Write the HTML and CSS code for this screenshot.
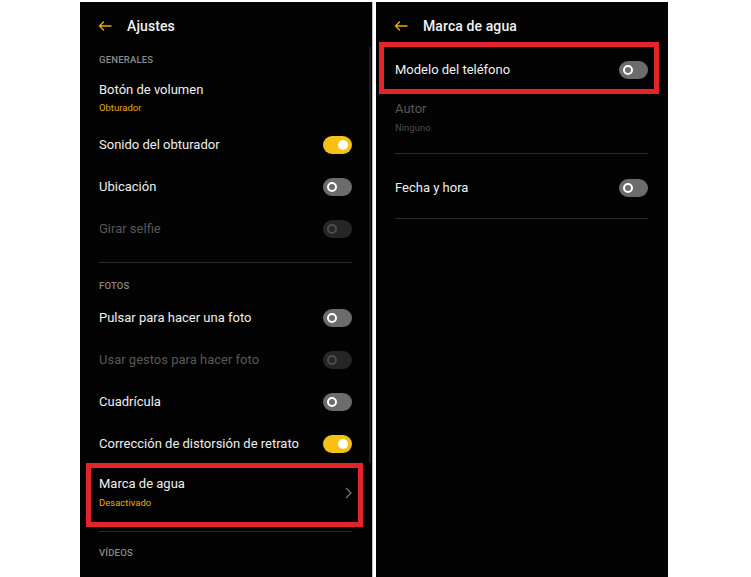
FILE: index.html
```html
<!DOCTYPE html>
<html lang="es">
<head>
<meta charset="utf-8">
<link rel="stylesheet" href="styles.css">
</head>
<body>
<div class="stage">
  <section class="panel panel-left">
    <div class="scrollbar"></div>
    <header class="head">
      <svg class="back" width="14" height="10" viewBox="0 0 14 10"><path d="M13 5H1.5M5.5 1L1.5 5L5.5 9" fill="none" stroke="#e5ad0c" stroke-width="1.4" stroke-linecap="round" stroke-linejoin="round"/></svg>
      <h1 class="title">Ajustes</h1>
    </header>
    <div class="section s-first">GENERALES</div>
    <div class="row row-two">
      <div class="texts"><div class="label">Botón de volumen</div><div class="sub">Obturador</div></div>
    </div>
    <div class="row"><div class="label">Sonido del obturador</div><span class="toggle on"></span></div>
    <div class="row"><div class="label">Ubicación</div><span class="toggle"></span></div>
    <div class="row"><div class="label dis">Girar selfie</div><span class="toggle disabled"></span></div>
    <div class="divider d-left"></div>
    <div class="section s-fotos">FOTOS</div>
    <div class="row"><div class="label">Pulsar para hacer una foto</div><span class="toggle"></span></div>
    <div class="row"><div class="label dis">Usar gestos para hacer foto</div><span class="toggle disabled"></span></div>
    <div class="row"><div class="label">Cuadrícula</div><span class="toggle"></span></div>
    <div class="row"><div class="label">Corrección de distorsión de retrato</div><span class="toggle on"></span></div>
    <div class="row row-marca">
      <div class="texts"><div class="label">Marca de agua</div><div class="sub">Desactivado</div></div>
      <svg class="chev" width="7" height="12" viewBox="0 0 7 12"><path d="M1 1L6 6L1 11" fill="none" stroke="#7a7a7a" stroke-width="1.2"/></svg>
    </div>
    <div class="divider d-marca"></div>
    <div class="section s-videos">VÍDEOS</div>
  </section>
  <section class="panel panel-right">
    <header class="head">
      <svg class="back" width="14" height="10" viewBox="0 0 14 10"><path d="M13 5H1.5M5.5 1L1.5 5L5.5 9" fill="none" stroke="#e5ad0c" stroke-width="1.4" stroke-linecap="round" stroke-linejoin="round"/></svg>
      <h1 class="title">Marca de agua</h1>
    </header>
    <div class="row row-modelo"><div class="label">Modelo del teléfono</div><span class="toggle"></span></div>
    <div class="row row-autor">
      <div class="texts"><div class="label dis">Autor</div><div class="sub dis-sub">Ninguno</div></div>
    </div>
    <div class="divider d-r1"></div>
    <div class="row row-fecha"><div class="label">Fecha y hora</div><span class="toggle"></span></div>
    <div class="divider d-r2"></div>
  </section>
</div>
</body>
</html>
```
FILE: styles.css
```css
* { box-sizing: border-box; margin: 0; padding: 0; }
html, body { background: #fff; }
body { width: 751px; height: 577px; overflow: hidden; font-family: Roboto, "Noto Sans", sans-serif; }
.stage { display: flex; gap: 4px; padding: 2px 0 0 80px; height: 577px; }
.panel { position: relative; width: 292px; height: 575px; background: #030303; padding: 0 20px 0 19px; color: #ececec; overflow: hidden; }
.panel-left { box-shadow: 1px 0 0 #bdbdbd; }
.scrollbar { position: absolute; left: 289px; top: 45px; width: 2px; height: 416px; background: #1c1c1c; }
.head { display: flex; align-items: center; height: 48px; }
.back { flex: none; margin-left: -1px; }
.title { font-size: 14px; font-weight: 500; color: #f2f2f2; margin-left: 15px; letter-spacing: 0.1px; }
.section { font-size: 9.5px; font-weight: 500; color: #8a8a8a; line-height: 18px; letter-spacing: 0.2px; }
.s-first { height: 19px; padding-top: 1px; }
.s-fotos { padding: 14px 0 2px; }
.s-videos { padding-top: 12px; }
.row { display: flex; align-items: center; justify-content: space-between; height: 42px; }
.label { font-size: 13px; line-height: 18px; color: #efefef; }
.label.dis { color: #585858; }
.sub { font-size: 9.5px; line-height: 14px; color: #e2aa0c; margin-top: 2px; }
.sub.dis-sub { color: #4c4c4c; margin-top: 3px; }
.row-two { height: 55px; align-items: flex-start; padding-top: 12px; }
.row-marca { position: relative; height: 64px; align-items: flex-start; padding-top: 10px; }
.row-marca .sub { margin-top: 3px; }
.row-marca::after { content: ""; position: absolute; left: -13px; right: -11px; top: -2px; bottom: 2px; border: 5px solid #e5232b; }
.chev { margin-top: 12px; margin-right: 0; }
.divider { height: 1px; background: #2a2a2a; }
.d-left { margin-top: 12px; }
.d-marca { margin-top: 2px; }
.row-modelo { position: relative; margin-top: -1px; }
.row-modelo::after { content: ""; position: absolute; left: -16px; right: -11px; top: -7px; bottom: -3px; border: 5px solid #e5232b; }
.row-autor { height: 62px; align-items: flex-start; padding-top: 9px; }
.d-r1 { margin-bottom: 13px; }
.d-r2 { margin-top: 9px; }
.toggle { position: relative; flex: none; width: 29px; height: 18px; border-radius: 9px; background: #6c6c6c; }
.toggle::after { content: ""; position: absolute; top: 4px; left: 4px; width: 10px; height: 10px; border-radius: 50%; box-sizing: border-box; border: 2.5px solid #fff; background: #6c6c6c; }
.toggle.on { background: #f6c114; }
.toggle.on::after { left: auto; right: 4px; border: none; background: #fff; }
.toggle.disabled { background: #262626; }
.toggle.disabled::after { border-color: #4e4e4e; background: #262626; }
```
